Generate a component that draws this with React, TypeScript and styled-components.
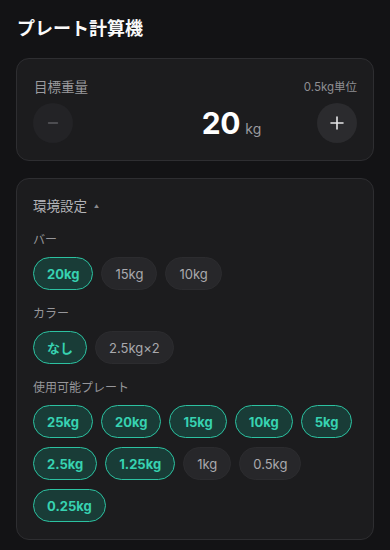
import React, { useState } from "react";
import styled, { createGlobalStyle } from "styled-components";

const GlobalStyle = createGlobalStyle`
  html, body {
    margin: 0;
    padding: 0;
    background: #131315;
  }
  body {
    font-family: Inter, "Noto Sans CJK JP", "Noto Sans", sans-serif;
    color: #fff;
    -webkit-font-smoothing: antialiased;
  }
`;

const BARS = ["20kg", "15kg", "10kg"];
const COLLARS = ["なし", "2.5kg×2"];
const PLATES = ["25kg", "20kg", "15kg", "10kg", "5kg", "2.5kg", "1.25kg", "1kg", "0.5kg", "0.25kg"];

export default function App() {
  const [weight, setWeight] = useState(20);
  const [bar, setBar] = useState("20kg");
  const [collar, setCollar] = useState("なし");
  const [plates, setPlates] = useState<string[]>(
    PLATES.filter((p) => p !== "1kg" && p !== "0.5kg")
  );

  const togglePlate = (p: string) =>
    setPlates((prev) => (prev.includes(p) ? prev.filter((x) => x !== p) : [...prev, p]));

  return (
    <Page>
      <GlobalStyle />
      <Title>プレート計算機</Title>

      <Card>
        <TargetHeader>
          <Label>目標重量</Label>
          <Step>0.5kg単位</Step>
        </TargetHeader>
        <TargetRow>
          <RoundButton dim onClick={() => setWeight(Math.max(0, weight - 0.5))}>
            <svg width="12" height="12" viewBox="0 0 12 12">
              <path d="M1.5 6h9" stroke="currentColor" strokeWidth="1.4" strokeLinecap="round" />
            </svg>
          </RoundButton>
          <Value>
            <Number>{weight}</Number>
            <Unit>kg</Unit>
          </Value>
          <RoundButton onClick={() => setWeight(weight + 0.5)}>
            <svg width="16" height="16" viewBox="0 0 16 16">
              <path d="M8 2v12M2 8h12" stroke="currentColor" strokeWidth="1.6" strokeLinecap="round" />
            </svg>
          </RoundButton>
        </TargetRow>
      </Card>

      <Card>
        <SettingsTitle>
          環境設定<Caret>▲</Caret>
        </SettingsTitle>

        <Section>
          <SubLabel>バー</SubLabel>
          <Chips>
            {BARS.map((b) => (
              <Chip key={b} active={b === bar} onClick={() => setBar(b)}>
                {b}
              </Chip>
            ))}
          </Chips>
        </Section>

        <Section>
          <SubLabel>カラー</SubLabel>
          <Chips>
            {COLLARS.map((c) => (
              <Chip key={c} active={c === collar} onClick={() => setCollar(c)}>
                {c}
              </Chip>
            ))}
          </Chips>
        </Section>

        <Section>
          <SubLabel>使用可能プレート</SubLabel>
          <Chips>
            {PLATES.map((p) => (
              <Chip key={p} active={plates.includes(p)} onClick={() => togglePlate(p)}>
                {p}
              </Chip>
            ))}
          </Chips>
        </Section>
      </Card>
    </Page>
  );
}

const Page = styled.div`
  padding: 17px 16px 0 16px;
  display: flex;
  flex-direction: column;
  gap: 17px;
`;

const Title = styled.h1`
  margin: 0 0 0 1px;
  font-size: 18px;
  font-weight: 700;
  line-height: 24px;
  color: #fafafa;
`;

const Card = styled.div`
  background: #1c1c1e;
  border: 1px solid #2e2e31;
  border-radius: 13px;
  padding: 17px 16px 17px 16px;
`;

const TargetHeader = styled.div`
  display: flex;
  justify-content: space-between;
  align-items: center;
  height: 20px;
`;

const Label = styled.span`
  font-size: 13.5px;
  color: #9b9b9f;
  padding-left: 1px;
`;

const Step = styled.span`
  font-size: 11.5px;
  color: #8e8e92;
`;

const TargetRow = styled.div`
  display: flex;
  align-items: center;
  margin-top: 7px;
`;

const RoundButton = styled.button<{ dim?: boolean }>`
  width: 40px;
  height: 40px;
  border-radius: 50%;
  border: none;
  padding: 0;
  display: flex;
  align-items: center;
  justify-content: center;
  cursor: pointer;
  background: ${({ dim }) => (dim ? "#232326" : "#2b2b2e")};
  color: ${({ dim }) => (dim ? "#5c5c60" : "#e6e6e8")};
`;

const Value = styled.div`
  flex: 1;
  display: flex;
  justify-content: center;
  align-items: baseline;
  gap: 5px;
  padding-left: 73px;
`;

const Number = styled.span`
  font-size: 30px;
  font-weight: 700;
  color: #fff;
  letter-spacing: -0.3px;
`;

const Unit = styled.span`
  font-size: 14px;
  color: #9a9a9e;
`;

const SettingsTitle = styled.div`
  display: flex;
  align-items: center;
  font-size: 13.5px;
  color: #b4b4b8;
  line-height: 20px;
`;

const Caret = styled.span`
  font-size: 5px;
  color: #8a8a8e;
  margin-left: 7px;
  margin-top: -1px;
`;

const Section = styled.div`
  margin-top: 16px;
`;

const SubLabel = styled.div`
  font-size: 12px;
  line-height: 16px;
  color: #96969a;
  margin-bottom: 9px;
`;

const Chips = styled.div`
  display: flex;
  flex-wrap: wrap;
  gap: 9px 8px;
`;

const Chip = styled.button<{ active?: boolean }>`
  height: 33px;
  padding: 0 13px;
  border-radius: 17px;
  font-family: Inter, "Noto Sans CJK JP", sans-serif;
  font-size: 13px;
  cursor: pointer;
  border: 1.3px solid ${({ active }) => (active ? "#2cc2a1" : "#2c2c2f")};
  background: ${({ active }) => (active ? "#193c37" : "#27272a")};
  color: ${({ active }) => (active ? "#37d2b1" : "#a9a9ad")};
  font-weight: ${({ active }) => (active ? 700 : 400)};
`;
